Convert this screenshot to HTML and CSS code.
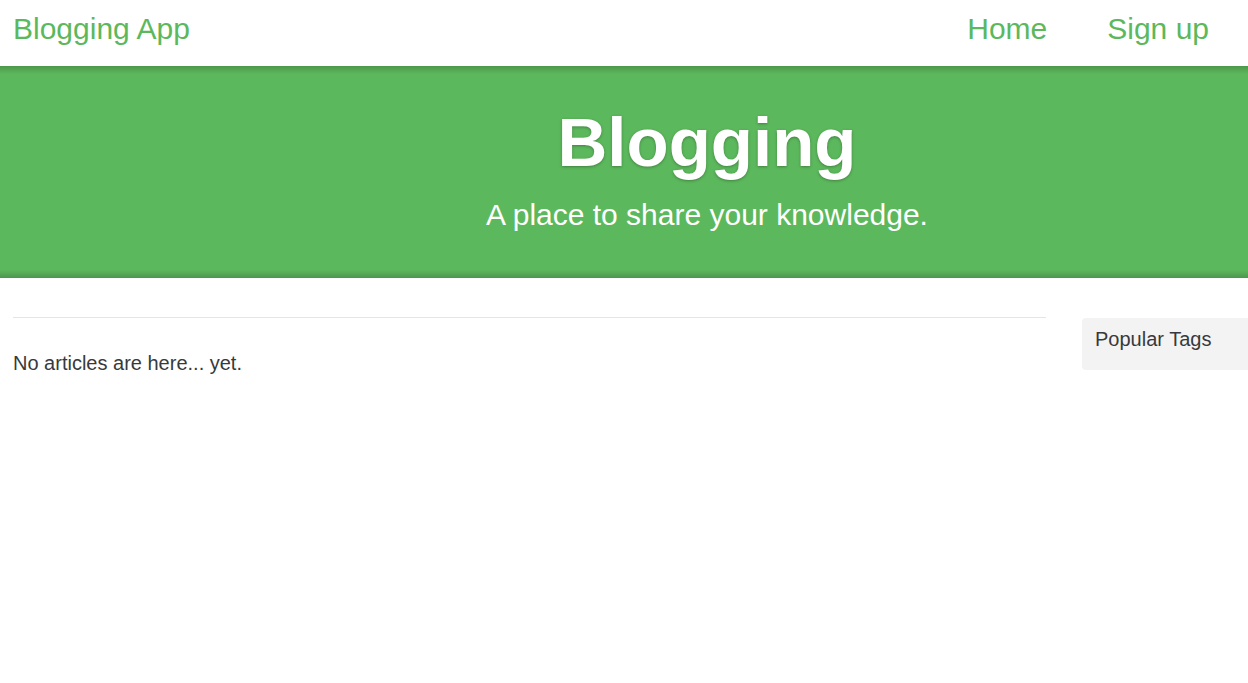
FILE: index.html
```html
<!DOCTYPE html>
<html lang="en">
<head>
<meta charset="utf-8">
<title>Blogging App</title>
<link rel="stylesheet" href="styles.css">
</head>
<body>
<nav class="navbar">
  <a class="brand" href="#">Blogging App</a>
  <ul class="nav">
    <li><a class="nav-link" href="#">Home</a></li>
    <li><a class="nav-link" href="#">Sign up</a></li>
  </ul>
</nav>
<section class="banner">
  <div class="banner-inner">
    <h1 class="logo-font">Blogging</h1>
    <p class="tagline">A place to share your knowledge.</p>
  </div>
</section>
<main class="page">
  <div class="feed">
    <hr class="feed-rule">
    <p class="empty">No articles are here... yet.</p>
  </div>
  <aside class="sidebar">
    <p class="sidebar-title">Popular Tags</p>
  </aside>
</main>
</body>
</html>
```

FILE: styles.css
```css
html, body {
  margin: 0;
  padding: 0;
  overflow-x: hidden;
}
body {
  font-family: "Liberation Sans", Arial, sans-serif;
  color: #373a3c;
  background: #fff;
}
a { text-decoration: none; }

.navbar {
  height: 66px;
  box-sizing: border-box;
  display: flex;
  justify-content: space-between;
  align-items: flex-start;
  padding: 12px 39px 0 13px;
}
.brand {
  color: #5cb85c;
  font-size: 30px;
  line-height: 34px;
}
.nav {
  list-style: none;
  margin: 0;
  padding: 0;
  display: flex;
  gap: 60px;
}
.nav-link {
  color: #5cb85c;
  font-size: 30px;
  line-height: 34px;
}

.banner {
  height: 212px;
  box-sizing: border-box;
  background:
    linear-gradient(to bottom, rgba(0,0,0,.18), rgba(0,0,0,0) 8px),
    linear-gradient(to top, rgba(0,0,0,.18), rgba(0,0,0,0) 8px),
    #5cb85c;
  color: #fff;
  overflow: hidden;
}
.banner-inner {
  width: 1414px;
  text-align: center;
  padding-top: 39px;
}
.logo-font {
  margin: 0;
  font-size: 69px;
  font-weight: 700;
  line-height: 76px;
  text-shadow: 0 1px 3px rgba(0,0,0,.3);
}
.tagline {
  margin: 17px 0 0;
  font-size: 30px;
  line-height: 34px;
}

.page {
  width: 1414px;
  display: flex;
  padding: 0 0 0 13px;
  gap: 36px;
}
.feed {
  width: 1033px;
  padding-top: 39px;
}
.feed-rule {
  margin: 0;
  border: 0;
  border-top: 1px solid #e5e5e5;
}
.empty {
  margin: 30px 0 0;
  font-size: 20px;
  line-height: 30px;
}
.sidebar {
  margin-top: 40px;
  width: 300px;
  height: 52px;
  box-sizing: border-box;
  background: #f3f3f3;
  border-radius: 4px;
  padding: 8px 13px;
}
.sidebar-title {
  margin: 0;
  font-size: 20px;
  line-height: 26px;
}
```
